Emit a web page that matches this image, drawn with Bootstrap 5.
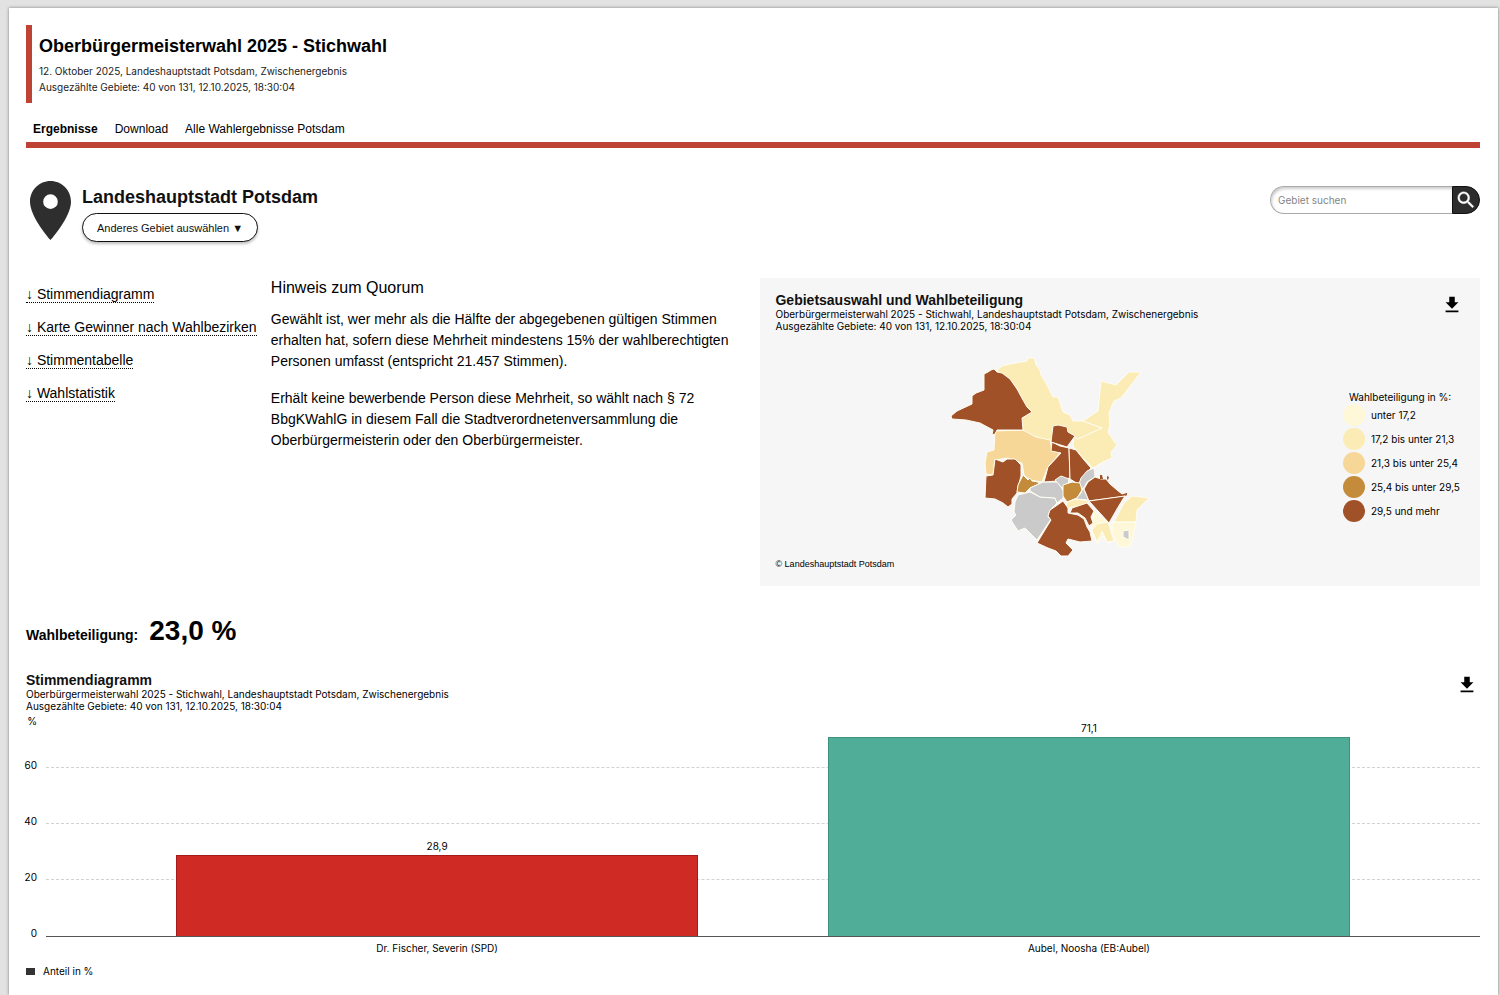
<!DOCTYPE html>
<html lang="de">
<head>
<meta charset="utf-8">
<meta name="viewport" content="width=device-width, initial-scale=1">
<title>Oberbürgermeisterwahl 2025 - Stichwahl</title>
<link href="https://cdn.jsdelivr.net/npm/bootstrap@5.3.0/dist/css/bootstrap.min.css" rel="stylesheet">
<style>
  body { background: #e2e2e2; color: #000; font: 14px/21px "Liberation Sans", Arial, sans-serif; }
  .sheet { margin: 8px 2px 0 9px; padding: 17px 18px 0 17px; min-height: calc(100vh - 8px); background: #fff; box-shadow: 0 0 3px rgba(0,0,0,.45); }
  .tiny { font-family: Inter, "Liberation Sans", sans-serif; font-size: 10px; line-height: 12px; }
  .election { border-left: 6px solid #be4334; padding: 11px 0 8px 7px; }
  .election h1 { font-size: 18px; line-height: 20px; margin-bottom: 7px; }
  .election .tiny { line-height: 16px; color: #222; }
  .tabs { margin-top: 16px; padding: 0 7px 3px; gap: 17px; border-bottom: 6px solid #be4334; }
  .tabs a { font-size: 12px; line-height: 20px; color: #000; text-decoration: none; }
  .area { margin-top: 33px; padding-left: 4px; }
  .area h2 { font-size: 18px; line-height: 20px; color: #111; padding-top: 6px; margin-bottom: 6px; }
  .pin { margin-right: 11px; }
  .pill { height: 29px; padding: 0 14px; background: #fff; border: 1px solid #111; border-radius: 15px; font-size: 11px; line-height: 12px; color: #111; box-shadow: 0 2px 3px rgba(0,0,0,.25); }
  .search { width: 210px; height: 28px; margin-top: 5px; }
  .search input { font-family: Inter, "Liberation Sans", sans-serif; font-size: 10px; min-width: 0; border: 1px solid #aaa; border-right: 0; border-radius: 14px 0 0 14px; padding: 0 7px; box-shadow: inset 1px 2px 3px rgba(0,0,0,.2); }
  .search input::placeholder { color: #858585; }
  .search button { width: 28px; background: #2d2d2d; border: 1px solid #111; border-radius: 0 14px 14px 0; }
  .overview { --bs-gutter-x: 15px; margin-top: 36px; }
  .jump { padding-top: 8px; gap: 16px; }
  .jump a { color: #000; text-decoration: none; white-space: nowrap; line-height: 16px; border-bottom: 1px dotted #000; }
  .note h3 { font-size: 16px; line-height: 20px; margin-bottom: 11px; }
  .note p { margin-bottom: 16px; }
  .mapbox { background: #f6f6f6; padding: 15px; min-height: 308px; }
  .mapbody { padding-top: 22px; }
  .caption h3 { font-size: 14px; line-height: 15px; color: #111; }
  .get { width: 22px; height: 22px; margin: 1px 2px 0 0; }
  .districts path { stroke: #fffdf2; stroke-width: 1; stroke-linejoin: round; }
  .districts .islet { stroke: none; }
  .c1 { fill: #fef8d8; background: #fef8d8; } .c2 { fill: #fbebb5; background: #fbebb5; }
  .c3 { fill: #f6d797; background: #f6d797; } .c4 { fill: #c48b3b; background: #c48b3b; }
  .c5 { fill: #a15127; background: #a15127; } .c0 { fill: #cacaca; }
  .classes { width: 140px; padding: 2px 0 0 18px; }
  .classes li { height: 24px; gap: 6px; }
  .classes strong { font-weight: 400; padding-left: 6px; }
  .dot { width: 22px; height: 22px; }
  .source { font-size: 9px; line-height: 12px; }
  .turnout { margin-top: 29px; gap: 11px; line-height: 32px; }
  .turnout dd { font-size: 28px; }
  .votes { padding-top: 22px; }
  .axis { width: 11px; padding-top: 3px; margin-right: 9px; }
  .axis div { height: 56px; }
  .plot { height: 225px; display: grid; border-bottom: 1px solid #555; }
  .plot > * { grid-area: 1 / 1; }
  .gridlines div { height: 56px; border-bottom: 1px dashed #d2d2d2; }
  .gridlines div:last-child { border: 0; }
  .bars { padding: 0 4.545%; z-index: 1; }
  .bars .band { flex: 1; height: 224px; }
  .barval { padding-bottom: 3px; }
  .bar { width: 80%; flex: none; border: 1px solid; border-bottom: 0; }
  .spd { background: #d02a24; border-color: #a31b1b; }
  .aubel { background: #50ae98; border-color: #3d917d; }
  .names { padding-top: 5px; }
  .key { padding-top: 11px; }
  .swatch { width: 9px; height: 7px; background: #333; }
</style>
</head>
<body>
<div class="sheet">
  <header>
    <div class="election">
      <h1 class="fw-bold">Oberbürgermeisterwahl 2025 - Stichwahl</h1>
      <p class="tiny mb-0">12. Oktober 2025, Landeshauptstadt Potsdam, Zwischenergebnis<br>Ausgezählte Gebiete: 40 von 131, 12.10.2025, 18:30:04</p>
    </div>
    <nav class="tabs d-flex" aria-label="Hauptnavigation">
      <a href="#" class="fw-bold" aria-current="page">Ergebnisse</a>
      <a href="#">Download</a>
      <a href="#">Alle Wahlergebnisse Potsdam</a>
    </nav>
  </header>

  <main>
    <section class="area d-flex justify-content-between align-items-start">
      <div class="d-flex align-items-start">
        <svg class="pin flex-shrink-0" width="41" height="59" viewBox="5 2 14 20" preserveAspectRatio="none" fill="#2e2e2e" aria-hidden="true"><path d="M12 2C8.130 2 5 5.130 5 9c0 5.250 7 13 7 13s7-7.750 7-13c0-3.870-3.130-7-7-7zm0 9.500a2.500 2.500 0 0 1 0-5 2.500 2.500 0 0 1 0 5z"/></svg>
        <div>
          <h2 class="fw-bold">Landeshauptstadt Potsdam</h2>
          <button type="button" class="pill d-block">Anderes Gebiet auswählen ▼</button>
        </div>
      </div>
      <form class="search d-flex" role="search">
        <input type="search" class="flex-grow-1" placeholder="Gebiet suchen" aria-label="Gebiet suchen">
        <button type="button" class="p-0 d-flex align-items-center justify-content-center" aria-label="Suchen">
          <svg width="22" height="22" viewBox="0 0 24 24" fill="#fff" stroke="#fff" stroke-width=".4" aria-hidden="true"><path d="M15.500 14h-.790l-.280-.270A6.471 6.471 0 0 0 16 9.500 6.500 6.500 0 1 0 9.500 16c1.610 0 3.090-.590 4.230-1.570l.270.280v.790l5 4.990L20.490 19l-4.990-5zm-6 0C7.010 14 5 11.990 5 9.500S7.010 5 9.500 5 14 7.010 14 9.500 11.990 14 9.500 14z"/></svg>
        </button>
      </form>
    </section>

    <div class="row overview">
      <nav class="col-2" aria-label="Inhalt">
        <div class="jump d-flex flex-column align-items-start">
          <a href="#stimmen">↓ Stimmendiagramm</a>
          <a href="#">↓ Karte Gewinner nach Wahlbezirken</a>
          <a href="#">↓ Stimmentabelle</a>
          <a href="#">↓ Wahlstatistik</a>
        </div>
      </nav>
      <article class="col-4 note">
        <h3 class="fw-normal">Hinweis zum Quorum</h3>
        <p>Gewählt ist, wer mehr als die Hälfte der abgegebenen gültigen Stimmen erhalten hat, sofern diese Mehrheit mindestens 15% der wahlberechtigten Personen umfasst (entspricht 21.457 Stimmen).</p>
        <p>Erhält keine bewerbende Person diese Mehrheit, so wählt nach § 72 BbgKWahlG in diesem Fall die Stadtverordnetenversammlung die Oberbürgermeisterin oder den Oberbürgermeister.</p>
      </article>
      <div class="col-6">
        <section class="mapbox">
          <div class="d-flex justify-content-between">
            <div class="caption">
              <h3 class="fw-bold mb-0">Gebietsauswahl und Wahlbeteiligung</h3>
              <p class="tiny mb-0">Oberbürgermeisterwahl 2025 - Stichwahl, Landeshauptstadt Potsdam, Zwischenergebnis<br>Ausgezählte Gebiete: 40 von 131, 12.10.2025, 18:30:04</p>
            </div>
            <button type="button" class="get border-0 bg-transparent p-0 d-flex" aria-label="Karte herunterladen"><svg width="22" height="22" viewBox="0 0 24 24" aria-hidden="true"><path d="M19 9h-4V3H9v6H5l7 7 7-7zM5 18v2h14v-2H5z"/></svg></button>
          </div>
          <div class="mapbody d-flex align-items-center">
            <div class="flex-grow-1">
              <svg class="districts d-block mx-auto" width="204" height="204" viewBox="948 354 204 204" role="img" aria-label="Wahlbeteiligung nach Gebieten">
                <path class="c2" d="M997 370 1002 366 1010 364 1027 361 1028 358 1034 358 1036 365 1040 370 1041 375 1045 381 1053 397 1058 397 1063 412 1070 415 1073 421 1083 421 1102 428 1080 440 1074 437 1052 444 1022 431Z"/>
                <path class="c2" d="M1083 421 1098 411 1101 381 1116 385 1129 372 1141 372 1121 398 1114 401 1109 413 1110 425 1108 432 1113 440 1117 445 1111 452 1112 458 1103 462 1093 468 1083 458 1073 446 1074 437 1078 439 1102 428Z"/>
                <path class="c3" d="M995 431 1023 430 1036 437 1050 440 1052 450 1060 453 1048 467 1042 482 1030 480 1024 475 1022 463 1007 458 995 460 993 475 986 474 985 463 987 452 994 450Z"/>
                <path class="c5" d="M951 416 957 411 972 404 972 396 976 393 984 390 984 374 988 372 991 370 994 369 997 372 1002 373 1010 379 1017 389 1023 400 1027 407 1032 412 1022 418 1023 430 997 430 995 434 992 435 993 430 980 423 966 420 952 419Z"/>
                <path class="c5" d="M995 459 1003 462 1007 459 1015 459 1021 465 1021 476 1018 487 1017 493 1012 499 1012 504 1008 507 1003 503 995 499 985 498 986 476 993 475Z"/>
                <path class="c4" d="M1023 475 1028 480 1030 478 1032 481 1038 482 1039 484 1030 488 1025 493 1017 492 1018 485Z"/>
                <path class="c0" d="M1018 495 1030 492 1040 497 1055 498 1057 503 1050 510 1048 517 1051 519 1037 540 1025 528 1018 531 1011 520 1016 515 1014 512 1015 502Z"/>
                <path class="c0" d="M1030 491 1030 488 1043 482 1058 482 1064 492 1063 498 1057 503 1055 498 1040 497Z"/>
                <path class="c5" d="M1044 482 1048 467 1061 453 1051 451 1052 442 1060 446 1069 448 1070 478 1057 481Z"/>
                <path class="c5" d="M1069 448 1076 450 1084 460 1091 468 1084 477 1078 484 1070 479Z"/>
                <path class="c5" d="M1053 426 1058 425 1067 427 1068 432 1075 436 1067 447 1051 442Z"/>
                <path class="c0" d="M1094 468 1095 477 1087 482 1083 489 1079 484 1081 478 1087 471Z"/>
                <path class="c0" d="M1055 480 1061 476 1069 479 1068 484 1062 488Z"/>
                <path class="c4" d="M1063 485 1072 482 1080 483 1082 490 1077 498 1067 502 1063 496Z"/>
                <path class="c0" d="M1083 488 1089 500 1076 499 1081 493Z"/>
                <path class="c2" d="M1066 503 1075 499 1089 501 1086 505 1068 508Z"/>
                <path class="c5" d="M1084 489 1088 482 1095 477 1101 479 1106 479 1110 484 1117 490 1122 494 1128 492 1127 496 1089 501Z"/>
                <path class="c5" d="M1089 501 1125 496 1123 499 1117 509 1109 523Z"/>
                <path class="c2" d="M1132 496 1149 498 1137 510 1136 522 1114 522 1124 503Z"/>
                <path class="c1" d="M1112 522 1136 522 1133 537 1130 547 1119 547 1112 533Z"/>
                <path class="c1" d="M1094 511 1109 523 1114 541 1107 543 1103 536 1097 544 1091 530Z"/>
                <path class="c2" d="M1097 524 1108 522 1114 541 1107 542 1102 531 1097 542 1092 530Z"/>
                <path class="c5" d="M1056 506 1063 501 1068 508 1068 513 1078 515 1084 519 1087 527 1090 532 1092 541 1080 542 1068 539 1066 543 1073 550 1068 556 1061 556 1056 551 1048 548 1037 543 1051 520 1048 516 1050 510Z"/>
                <path class="c5" d="M1070 513 1072 508 1087 503 1094 511 1091 517 1093 523 1089 526 1085 518 1078 513Z"/>
                <path class="c0" d="M1123 531 1129 530 1129 540 1123 537Z"/>
                <path class="c5 islet" d="M1100 475h2l1 4h-3zM1107 476l2 1-1 3-1-1z"/>
              </svg>
            </div>
            <div class="classes tiny">
              <strong class="d-block">Wahlbeteiligung in %:</strong>
              <ul class="list-unstyled mb-0">
                <li class="d-flex align-items-center"><span class="dot rounded-circle c1"></span>unter 17,2</li>
                <li class="d-flex align-items-center"><span class="dot rounded-circle c2"></span>17,2 bis unter 21,3</li>
                <li class="d-flex align-items-center"><span class="dot rounded-circle c3"></span>21,3 bis unter 25,4</li>
                <li class="d-flex align-items-center"><span class="dot rounded-circle c4"></span>25,4 bis unter 29,5</li>
                <li class="d-flex align-items-center"><span class="dot rounded-circle c5"></span>29,5 und mehr</li>
              </ul>
            </div>
          </div>
          <p class="source mb-0">© Landeshauptstadt Potsdam</p>
        </section>
      </div>
    </div>

    <dl class="turnout d-flex align-items-baseline fw-bold mb-0">
      <dt>Wahlbeteiligung:</dt>
      <dd class="mb-0">23,0 %</dd>
    </dl>

    <section id="stimmen" class="votes">
      <div class="d-flex justify-content-between">
        <div class="caption">
          <h3 class="fw-bold mb-0">Stimmendiagramm</h3>
          <p class="tiny mb-0">Oberbürgermeisterwahl 2025 - Stichwahl, Landeshauptstadt Potsdam, Zwischenergebnis<br>Ausgezählte Gebiete: 40 von 131, 12.10.2025, 18:30:04</p>
        </div>
        <button type="button" class="get border-0 bg-transparent p-0 d-flex" aria-label="Diagramm herunterladen"><svg width="22" height="22" viewBox="0 0 24 24" aria-hidden="true"><path d="M19 9h-4V3H9v6H5l7 7 7-7zM5 18v2h14v-2H5z"/></svg></button>
      </div>
      <div class="d-flex align-items-start tiny">
        <div class="axis flex-shrink-0">
          <div class="d-flex flex-column justify-content-between align-items-end"><span>%</span><span>60</span></div>
          <div class="d-flex flex-column justify-content-end align-items-end">40</div>
          <div class="d-flex flex-column justify-content-end align-items-end">20</div>
          <div class="d-flex flex-column justify-content-end align-items-end">0</div>
        </div>
        <div class="flex-grow-1">
          <div class="plot">
            <div class="gridlines"><div></div><div></div><div></div><div></div></div>
            <div class="bars d-flex">
              <div class="band d-flex flex-column justify-content-end align-items-center">
                <span class="barval">28,9</span><div class="bar spd" style="height:36.125%"></div>
              </div>
              <div class="band d-flex flex-column justify-content-end align-items-center">
                <span class="barval">71,1</span><div class="bar aubel" style="height:88.875%"></div>
              </div>
            </div>
          </div>
          <div class="names">
            <div class="bars d-flex text-center">
              <div class="w-50">Dr. Fischer, Severin (SPD)</div>
              <div class="w-50">Aubel, Noosha (EB:Aubel)</div>
            </div>
          </div>
        </div>
      </div>
      <div class="key tiny d-flex align-items-center gap-2"><span class="swatch"></span>Anteil in %</div>
    </section>
  </main>
</div>
<script src="https://cdn.jsdelivr.net/npm/bootstrap@5.3.0/dist/js/bootstrap.bundle.min.js"></script>
</body>
</html>
